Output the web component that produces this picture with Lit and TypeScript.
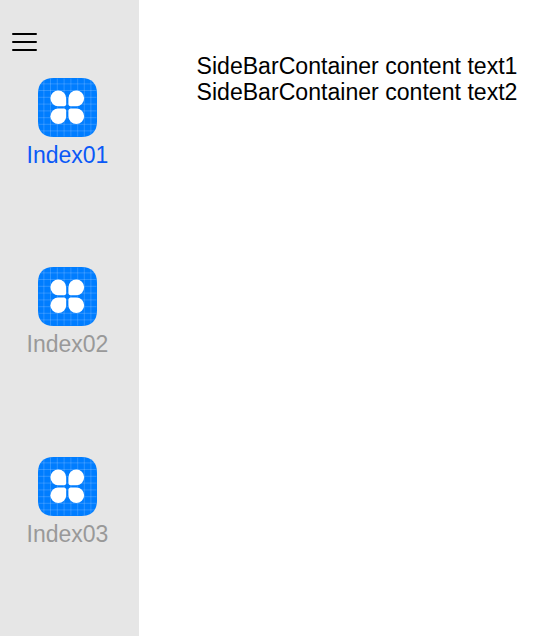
import { LitElement, html, css, svg } from "lit";
import { customElement, property, state } from "lit/decorators.js";
import { classMap } from "lit/directives/class-map.js";

const GRID = [5.9, 12.5, 19.3, 26.1, 32.9, 39.7, 46.3, 52.9];

@customElement("app-icon")
class AppIcon extends LitElement {
  static styles = css`
    :host { display: block; width: 59px; height: 59px; }
    svg { display: block; }
  `;
  render() {
    return html`<svg width="59" height="59" viewBox="0 0 59 59">
      <path fill="#007dff" d="M15.5 0H43.5C53.5 0 59 5.5 59 15.5V43.5C59 53.5 53.5 59 43.5 59H15.5C5.5 59 0 53.5 0 43.5V15.5C0 5.5 5.5 0 15.5 0Z" />
      <g stroke="#fff" stroke-opacity=".2" stroke-width=".9">
        ${GRID.map((p) => svg`<path d="M${p} .5V58.5M.5 ${p}H58.5" />`)}
      </g>
      <g fill="#fff">
        <path d="M20.3 12.5a7.9 7.9 0 0 1 7.9 7.9V25.7a2.5 2.5 0 0 1-2.5 2.5H20.3a7.85 7.85 0 0 1 0-15.7Z" />
        <path d="M38.3 12.5a7.9 7.9 0 0 0-7.9 7.9V25.7a2.5 2.5 0 0 0 2.5 2.5h5.4a7.85 7.85 0 0 0 0-15.7Z" />
        <path d="M20.3 46.1a7.9 7.9 0 0 0 7.9-7.9v-5.3a2.5 2.5 0 0 0-2.5-2.5H20.3a7.85 7.85 0 0 0 0 15.7Z" />
        <path d="M38.3 46.1a7.9 7.9 0 0 1-7.9-7.9v-5.3a2.5 2.5 0 0 1 2.5-2.5h5.4a7.85 7.85 0 0 1 0 15.7Z" />
      </g>
    </svg>`;
  }
}

@customElement("side-item")
class SideItem extends LitElement {
  @property() label = "";
  @property({ type: Boolean }) active = false;
  static styles = css`
    :host { display: flex; flex-direction: column; align-items: center; cursor: pointer; }
    .label { margin-top: 5px; font-size: 23px; line-height: 27px; color: #999; white-space: nowrap; }
    .active { color: #0a59f7; }
  `;
  render() {
    return html`<app-icon></app-icon>
      <span class=${classMap({ label: true, active: this.active })}>${this.label}</span>`;
  }
}

@customElement("app-root")
class AppRoot extends LitElement {
  @state() private current = 0;
  static styles = css`
    :host { display: flex; height: 636px; background: #fff; overflow: hidden;
      font-family: "Liberation Sans", Arial, sans-serif; }
    .side { box-sizing: border-box; width: 139px; flex: none; padding-top: 32px; background: #e6e6e6; }
    .menu { display: block; margin-left: 11px; }
    .items { display: flex; flex-direction: column; gap: 98.4px; margin-top: 26px; padding-right: 4px; }
    .content { padding: 53px 0 0 57.5px; font-size: 23.1px; line-height: 26px; color: #000; white-space: nowrap; }
  `;
  render() {
    return html`
      <nav class="side">
        <svg class="menu" width="27" height="20" viewBox="0 0 27 20">
          <path d="M2 2H25M2 10H25M2 18H25" stroke="#000" stroke-width="2" stroke-linecap="round" />
        </svg>
        <div class="items">
          ${["Index01", "Index02", "Index03"].map((name, i) => html`
            <side-item .label=${name} .active=${this.current === i} @click=${() => (this.current = i)}></side-item>`)}
        </div>
      </nav>
      <main class="content">
        <div>SideBarContainer content text1</div>
        <div>SideBarContainer content text2</div>
      </main>`;
  }
}
